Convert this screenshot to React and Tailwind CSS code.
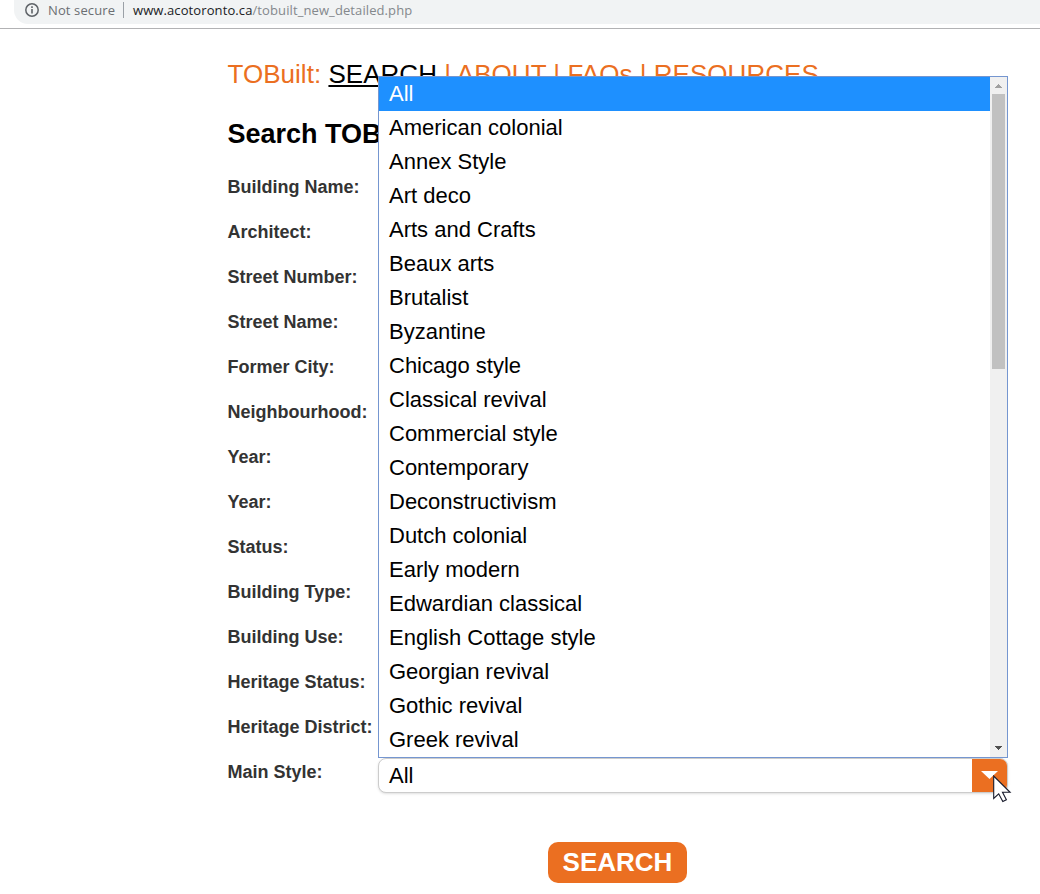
const STYLES = [
  "All", "American colonial", "Annex Style", "Art deco", "Arts and Crafts", "Beaux arts",
  "Brutalist", "Byzantine", "Chicago style", "Classical revival", "Commercial style",
  "Contemporary", "Deconstructivism", "Dutch colonial", "Early modern", "Edwardian classical",
  "English Cottage style", "Georgian revival", "Gothic revival", "Greek revival",
];

const LABELS = [
  "Building Name:", "Architect:", "Street Number:", "Street Name:", "Former City:",
  "Neighbourhood:", "Year:", "Year:", "Status:", "Building Type:", "Building Use:",
  "Heritage Status:", "Heritage District:",
];

function AddressBar() {
  return (
    <header className="h-[29px] border-b border-[#b2b2b4] pl-[14px]">
      <div className="flex h-6 items-center rounded-bl-[14px] bg-[#f1f3f4] pb-[4px] pl-[11px] font-['Open_Sans','Noto_Sans',sans-serif] text-[13px] leading-5 text-[#6b6e72]">
        <svg width="14" height="14" viewBox="0 0 14 14" fill="none" className="shrink-0">
          <circle cx="7" cy="7" r="6.2" stroke="#5f6368" strokeWidth="1.5" />
          <path d="M7 6v4.5M7 3.3v1.6" stroke="#5f6368" strokeWidth="1.6" />
        </svg>
        <span className="ml-[9px] w-[67px] whitespace-nowrap tracking-[0.12px]">Not secure</span>
        <span className="ml-2 h-4 w-px bg-[#9aa0a6]" />
        <span className="ml-[9px] whitespace-nowrap text-[#84888c] tracking-[0.1px]">
          <span className="text-[#202124]">www.acotoronto.ca</span>/tobuilt_new_detailed.php
        </span>
      </div>
    </header>
  );
}

function StyleMenu() {
  return (
    <div className="absolute bottom-[35px] left-0 flex h-[682px] w-[630px] border border-[#7596d0] bg-white">
      <ul className="flex-1 text-[22px] leading-[34px] text-black">
        {STYLES.map((name, i) => (
          <li key={name} className={i === 0 ? "h-[34px] bg-[#1e90ff] pl-[10px] text-white" : "h-[34px] pl-[10px]"}>
            {name}
          </li>
        ))}
      </ul>
      <div className="flex w-[17px] flex-col items-center bg-[#f0f0f0]">
        <svg width="17" height="17" shapeRendering="crispEdges">
          <path d="M8 7h1v1h1v1h1v1h1v1H5v-1h1V9h1V8h1z" fill="#a0a0a0" />
        </svg>
        <div className="mr-px h-[275px] w-[13px] bg-[#c1c1c1]" />
        <svg width="17" height="17" className="mt-auto" shapeRendering="crispEdges">
          <path d="M5 6h7v1h-1v1h-1v1H9v1H8V9H7V8H6V7H5z" fill="#505050" />
        </svg>
      </div>
    </div>
  );
}

export default function App() {
  return (
    <div className="h-[894px] w-[1040px] overflow-hidden bg-white font-['Liberation_Sans',Arial,sans-serif]">
      <AddressBar />
      <main className="pl-[227.5px]">
        <nav className="mt-[29px] h-8 whitespace-nowrap text-[26px] leading-8 tracking-[0.03px] text-[#eb6f21]">
          TOBuilt: <a className="text-black underline decoration-2 underline-offset-2">SEARCH</a> | ABOUT | FAQs | RESOURCES
        </nav>
        <h1 className="mt-[28px] h-8 text-[27px] font-bold leading-8 text-black">Search TOBuilt</h1>
        <form className="mt-[15px] text-[18px] font-bold text-[#333333]">
          {LABELS.map((label, i) => (
            <div key={i} className="flex h-[45px] items-center pb-[1px]">{label}</div>
          ))}
          <div className="flex h-[45px] items-start">
            <label className="w-[150.5px] leading-[44px]">Main Style:</label>
            <div className="relative mt-[8px] h-[35px] w-[630px]">
              <div className="flex h-full items-stretch overflow-hidden rounded-lg border border-[#cccccc] bg-white shadow-sm">
                <span className="flex-1 pl-[10px] text-[22px] font-normal leading-[33px] text-black">All</span>
                <span className="flex w-[35px] justify-center bg-[#eb6f21]">
                  <svg width="17" height="8" viewBox="0 0 17 8" className="mt-[12px]">
                    <path d="M0 0h17L8.5 8z" fill="#fff" />
                  </svg>
                </span>
              </div>
              <div className="font-normal"><StyleMenu /></div>
              <svg width="19" height="28" viewBox="0 0 19 28" className="absolute left-[615px] top-[17px]">
                <path d="M.7 1v22.5l5-4.7 4.1 7.8 3.6-1.9-3.9-7.4h7.6z" fill="#fff" stroke="#171a2b" strokeWidth="1.1" />
              </svg>
            </div>
          </div>
          <button type="button" className="ml-[320.5px] mt-[47px] h-[41px] w-[139px] rounded-[10px] bg-[#eb6f21] text-[26px] font-bold leading-[39px] text-white">
            SEARCH
          </button>
        </form>
      </main>
    </div>
  );
}
